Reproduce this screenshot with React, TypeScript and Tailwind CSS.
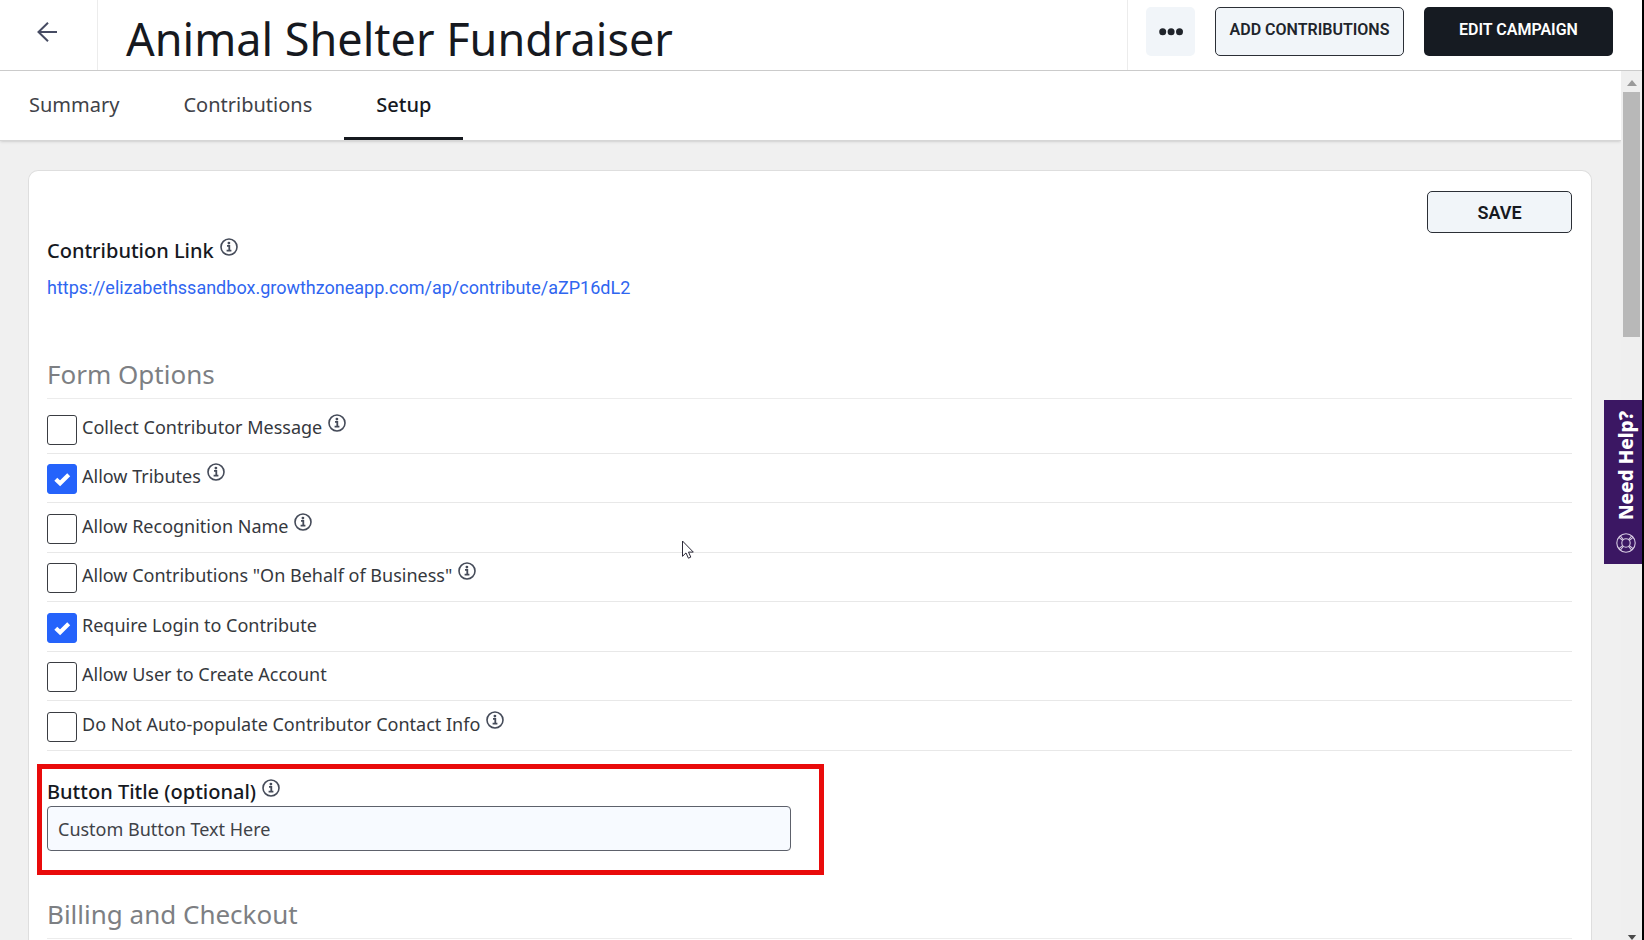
import { useState } from "react";

type Option = {
  id: string;
  label: string;
  info: boolean;
  checked: boolean;
};

const TABS = ["Summary", "Contributions", "Setup"];

const OPTIONS: Option[] = [
  { id: "message", label: "Collect Contributor Message", info: true, checked: false },
  { id: "tributes", label: "Allow Tributes", info: true, checked: true },
  { id: "recognition", label: "Allow Recognition Name", info: true, checked: false },
  { id: "business", label: 'Allow Contributions "On Behalf of Business"', info: true, checked: false },
  { id: "login", label: "Require Login to Contribute", info: false, checked: true },
  { id: "account", label: "Allow User to Create Account", info: false, checked: false },
  { id: "contact", label: "Do Not Auto-populate Contributor Contact Info", info: true, checked: false },
];

const CONTRIBUTE_URL =
  "https://elizabethssandbox.growthzoneapp.com/ap/contribute/aZP16dL2";

const btnBase = "rounded-[5px] font-['Roboto',sans-serif] font-semibold";
const labelCls = "text-[20px] leading-7 font-medium text-[#16191f]";
const sectionCls =
  "border-b border-[#ececec] text-[26px] leading-8 text-[#7d7f83]";

function InfoIcon() {
  return (
    <svg
      viewBox="0 0 18 18"
      className="mb-2 ml-[6px] size-[18px] shrink-0"
      fill="none"
      stroke="#454b59"
      aria-hidden="true"
    >
      <circle cx="9" cy="9" r="8" strokeWidth="1.6" />
      <circle cx="8.9" cy="5.1" r="1.4" fill="#454b59" stroke="none" />
      <path d="M7 7.9h2.3v4.7M6.6 12.7h4.8" strokeWidth="1.8" />
    </svg>
  );
}

function BackIcon() {
  return (
    <svg
      viewBox="0 0 20 20"
      className="size-5"
      fill="none"
      stroke="#474c63"
      strokeWidth="2"
      aria-hidden="true"
    >
      <path d="M11 .8 1.5 10l9.5 9.2M1.5 10H20" />
    </svg>
  );
}

function LifeRing() {
  return (
    <svg
      viewBox="0 0 20 20"
      className="size-5"
      fill="none"
      stroke="#d6cbe2"
      strokeWidth="1.1"
      aria-hidden="true"
    >
      <circle cx="10" cy="10" r="9.2" />
      <circle cx="10" cy="10" r="4.2" />
      <path d="m3 4.4 3.8 3.2M4.4 3l3.2 3.8M17 4.4l-3.8 3.2M15.6 3l-3.2 3.8M3 15.6l3.8-3.2M4.4 17l3.2-3.8M17 15.6l-3.8-3.2M15.6 17l-3.2-3.8" />
    </svg>
  );
}

function Header() {
  return (
    <header className="flex h-[71px] shrink-0 border-b border-[#cbcbcb] bg-white">
      <button
        type="button"
        aria-label="Back"
        className="flex w-[98px] shrink-0 justify-center border-r border-[#ececec] pt-[22px] pr-1"
      >
        <BackIcon />
      </button>
      <h1 className="min-w-0 flex-1 truncate pt-[5px] pl-7 text-[45px] leading-[68px] text-[#16191f]">
        Animal Shelter Fundraiser
      </h1>
      <div className="flex shrink-0 items-start gap-5 border-l border-[#ececec] pt-[7px] pr-[29px] pl-[18px]">
        <button
          type="button"
          aria-label="More actions"
          className={`${btnBase} flex h-[49px] w-[49px] items-center justify-center bg-[#f1f5f9]`}
        >
          <svg viewBox="0 0 24 8" className="h-2 w-6" fill="#20242b" aria-hidden="true">
            <circle cx="3.7" cy="3.8" r="3.5" />
            <circle cx="12.1" cy="3.8" r="3.5" />
            <circle cx="20.5" cy="3.8" r="3.5" />
          </svg>
        </button>
        <button
          type="button"
          className={`${btnBase} h-[49px] w-[189px] border border-[#2b2f36] bg-[#f1f5f9] pb-[3px] text-[16px] text-[#20242b]`}
        >
          ADD CONTRIBUTIONS
        </button>
        <button
          type="button"
          className={`${btnBase} h-[49px] w-[189px] bg-[#161b22] pb-[3px] text-[16px] text-white`}
        >
          EDIT CAMPAIGN
        </button>
      </div>
    </header>
  );
}

function Tabs() {
  const [active, setActive] = useState("Setup");

  return (
    <nav className="flex h-[70px] shrink-0 border-b border-[#d6d6d6] bg-white shadow-sm">
      {TABS.map((tab) => (
        <button
          key={tab}
          type="button"
          onClick={() => setActive(tab)}
          className={`border-b-3 px-8 pt-[2px] text-[20px] first:pl-[29px] ${
            active === tab
              ? "border-[#16191f] font-medium text-[#16191f]"
              : "border-transparent text-[#3f4248]"
          }`}
        >
          {tab}
        </button>
      ))}
    </nav>
  );
}

function OptionRow({
  option,
  onToggle,
}: {
  option: Option;
  onToggle: (id: string) => void;
}) {
  return (
    <li className="flex items-end border-b border-[#e8e8e8] pb-2">
      <span className="relative size-[30px] shrink-0">
        <input
          id={option.id}
          type="checkbox"
          checked={option.checked}
          onChange={() => onToggle(option.id)}
          className="block size-[30px] appearance-none rounded-[3px] border border-[#3a3d42] bg-white checked:border-[#2563fb] checked:bg-[#2563fb]"
        />
        {option.checked && (
          <svg
            viewBox="0 0 30 30"
            className="pointer-events-none absolute inset-0 size-[30px]"
            fill="none"
            stroke="#fff"
            strokeWidth="4.2"
            aria-hidden="true"
          >
            <path d="m8.8 15.2 4.3 4.1 8.6-8.6" />
          </svg>
        )}
      </span>
      <label
        htmlFor={option.id}
        className="pb-1 pl-[5px] text-[18px] leading-7 text-[#35383d]"
      >
        {option.label}
      </label>
      {option.info && (
        <span className="pb-[5px]">
          <InfoIcon />
        </span>
      )}
    </li>
  );
}

function SetupForm() {
  const [options, setOptions] = useState(OPTIONS);
  const [title, setTitle] = useState("Custom Button Text Here");

  const toggle = (id: string) =>
    setOptions((list) =>
      list.map((o) => (o.id === id ? { ...o, checked: !o.checked } : o))
    );

  return (
    <form
      className="mr-[29px] ml-7 rounded-t-[10px] border border-b-0 border-[#dedede] bg-white pt-5 pr-[19px] pb-6 pl-[18px]"
      onSubmit={(e) => e.preventDefault()}
    >
      <div className="flex justify-end">
        <button
          type="submit"
          className={`${btnBase} h-[42px] w-[145px] border border-[#2b2f36] bg-[#f1f5f9] text-[18px] text-[#16191f]`}
        >
          SAVE
        </button>
      </div>

      {/* Contribution link */}
      <div className="mt-1 flex items-center">
        <span className={labelCls}>Contribution Link</span>
        <InfoIcon />
      </div>
      <a
        href={CONTRIBUTE_URL}
        className="mt-[9px] block font-['Roboto',sans-serif] text-[18px] leading-7 text-[#2f66f0]"
      >
        {CONTRIBUTE_URL}
      </a>

      {/* Form options */}
      <h2 className={`${sectionCls} mt-14 pb-2`}>Form Options</h2>
      <ul className="mt-[5px] grid h-[347px] auto-rows-fr">
        {options.map((o) => (
          <OptionRow key={o.id} option={o} onToggle={toggle} />
        ))}
      </ul>

      {/* Button title */}
      <div className="mt-[13px] -ml-[10px] h-[111px] w-[787px] border-[5px] border-[#e90b0b] px-[5px] pt-[9px]">
        <div className="flex items-center">
          <label htmlFor="button-title" className={labelCls}>
            Button Title (optional)
          </label>
          <InfoIcon />
        </div>
        <input
          id="button-title"
          type="text"
          value={title}
          onChange={(e) => setTitle(e.target.value)}
          className="block h-[45px] w-[744px] rounded-[4px] border border-[#5d616b] bg-[#f7faff] px-[10px] text-[18px] text-[#3f4248]"
        />
      </div>

      {/* Billing */}
      <h2 className={`${sectionCls} mt-[23px] pb-2`}>Billing and Checkout</h2>
    </form>
  );
}

function Scrollbar() {
  return (
    <div className="flex w-[21px] shrink-0 flex-col items-center bg-[#efefef]" aria-hidden="true">
      <svg viewBox="0 0 10 6" className="mt-[9px] h-[6px] w-[10px]">
        <path d="M5 0 10 6H0z" fill="#9a9a9a" />
      </svg>
      <div className="mt-[6px] h-[245px] w-[17px] bg-[#b8b8b8]" />
      <svg viewBox="0 0 10 6" className="mt-auto h-[5px] w-[10px]">
        <path d="M5 6 10 0H0z" fill="#4a4a4a" />
      </svg>
    </div>
  );
}

export default function App() {
  return (
    <div className="relative flex h-screen flex-col overflow-hidden border-r-2 border-black bg-[#f0f0f0] font-['Noto_Sans',sans-serif]">
      <Header />
      <div className="flex min-h-0 flex-1">
        <main className="flex min-w-0 flex-1 flex-col overflow-hidden">
          <Tabs />
          <div className="min-h-0 flex-1 overflow-hidden pt-[29px]">
            <SetupForm />
          </div>
        </main>
        <Scrollbar />
      </div>

      {/* Floating help tab */}
      <button
        type="button"
        className="absolute top-[400px] right-0 flex h-[164px] w-[38px] flex-col items-center justify-between bg-[#3b1763] pt-[11px] pb-[11px] pl-[6px] text-white"
      >
        <span className="rotate-180 text-[19px] leading-6 font-extrabold [writing-mode:vertical-rl]">
          Need Help?
        </span>
        <LifeRing />
      </button>

      {/* Pointer */}
      <svg
        viewBox="0 0 12 19"
        className="pointer-events-none absolute top-[540px] left-[682px] h-[19px] w-3"
        fill="#fff"
        stroke="#2c2938"
        aria-hidden="true"
      >
        <path d="M.5 1v15.3l3.5-3.4 2.4 5.3 2.4-1.1-2.3-5h4.8z" />
      </svg>
    </div>
  );
}
